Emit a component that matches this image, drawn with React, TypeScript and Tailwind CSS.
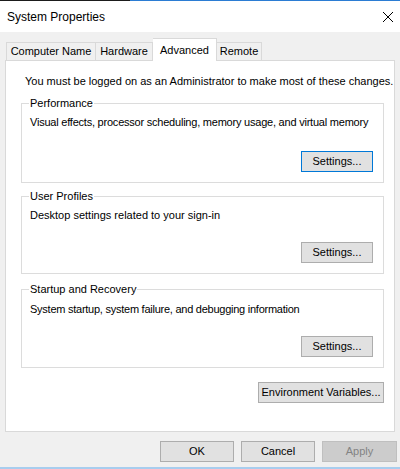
import React from 'react';

/**
 * System Properties - Advanced tab
 */

const FONT = { fontFamily: '"Liberation Sans", Arial, sans-serif' };

function WinButton({
  label,
  className = '',
  focused = false,
  disabled = false,
}: {
  label: string;
  className?: string;
  focused?: boolean;
  disabled?: boolean;
}) {
  return (
    <button
      className={
        'h-[21px] text-[11px] leading-none whitespace-nowrap border ' +
        (focused
          ? 'border-[#0078d7] bg-[#e1e1e1] text-black '
          : disabled
            ? 'border-[#bfbfbf] bg-[#cccccc] text-[#838383] '
            : 'border-[#adadad] bg-[#e1e1e1] text-black ') +
        className
      }
    >
      {label}
    </button>
  );
}

function GroupBox({
  title,
  text,
  className,
  textClass = '',
  focused = false,
}: {
  title: string;
  text: string;
  className: string;
  textClass?: string;
  focused?: boolean;
}) {
  return (
    <div
      className={
        'relative flex flex-col border border-[#dcdcdc] pl-[8px] pr-[10px] pb-[10px] ' +
        className
      }
    >
      {/* 枠線に重なるラベル */}
      <span className="absolute left-[7px] top-[-8px] bg-white px-[1px] text-[11px] leading-[15px] whitespace-nowrap text-black">
        {title}
      </span>
      <p className={'text-[11px] leading-[15px] whitespace-nowrap text-black ' + textClass}>
        {text}
      </p>
      <div className="mt-auto flex justify-end">
        <WinButton label="Settings..." className="w-[72px]" focused={focused} />
      </div>
    </div>
  );
}

export default function App() {
  return (
    <div
      className="w-[400px] h-[469px] bg-[#f0f0f0] flex flex-col overflow-hidden"
      style={FONT}
    >
      {/* 上端のライン */}
      <div className="flex h-px">
        <div className="w-[130px] bg-[#1b1b1b]" />
        <div className="flex-1 bg-[#2b7cd3]" />
      </div>

      {/* タイトルバー */}
      <div className="h-[31px] bg-white flex items-center justify-between pl-[7px] pr-[6px]">
        <span className="text-[12px] text-black">System Properties</span>
        <svg width="12" height="12" viewBox="0 0 12 12">
          <path d="M1 1 L11 11 M11 1 L1 11" stroke="#000" strokeWidth="1" fill="none" />
        </svg>
      </div>

      {/* タブ */}
      <div className="h-[28px] flex items-end pl-[6px] relative z-10 text-[11px] whitespace-nowrap text-black">
        <div className="w-[90px] h-[18px] border border-b-0 border-[#d9d9d9] flex items-center justify-center">
          Computer Name
        </div>
        <div className="w-[57px] h-[18px] border border-b-0 border-l-0 border-[#d9d9d9] flex items-center justify-center">
          Hardware
        </div>
        <div className="w-[64px] h-[23px] -mb-px border border-b-0 border-l-0 border-[#d9d9d9] bg-white flex items-start pt-[3px] justify-center">
          Advanced
        </div>
        <div className="w-[45px] h-[18px] border border-b-0 border-l-0 border-[#d9d9d9] flex items-center justify-center">
          Remote
        </div>
      </div>

      {/* タブパネル */}
      <div className="ml-[5px] w-[390px] h-[372px] bg-white border border-[#d9d9d9] pl-[15px] pr-[10px] pt-[13px] flex flex-col">
        <p className="pl-[4px] text-[11px] leading-[15px] whitespace-nowrap text-black">
          You must be logged on as an Administrator to make most of these changes.
        </p>

        <GroupBox
          title="Performance"
          text="Visual effects, processor scheduling, memory usage, and virtual memory"
          className="mt-[14px] h-[80px] pt-[11px]"
          textClass="tracking-[-0.22px]"
          focused
        />
        <GroupBox
          title="User Profiles"
          text="Desktop settings related to your sign-in"
          className="mt-[13px] h-[78px] pt-[11px]"
        />
        <GroupBox
          title="Startup and Recovery"
          text="System startup, system failure, and debugging information"
          className="mt-[15px] h-[79px] pt-[12px]"
          textClass="tracking-[-0.25px]"
        />

        <div className="mt-[14px] flex justify-end">
          <WinButton label="Environment Variables..." className="w-[126px]" />
        </div>
      </div>

      {/* 下部ボタン */}
      <div className="flex justify-end gap-[7px] pr-[3px] pt-[9px]">
        <WinButton label="OK" className="w-[74px]" />
        <WinButton label="Cancel" className="w-[74px]" />
        <WinButton label="Apply" className="w-[75px]" disabled />
      </div>

      <div className="mt-auto h-[2px] bg-[#a8cdee]" />
    </div>
  );
}
